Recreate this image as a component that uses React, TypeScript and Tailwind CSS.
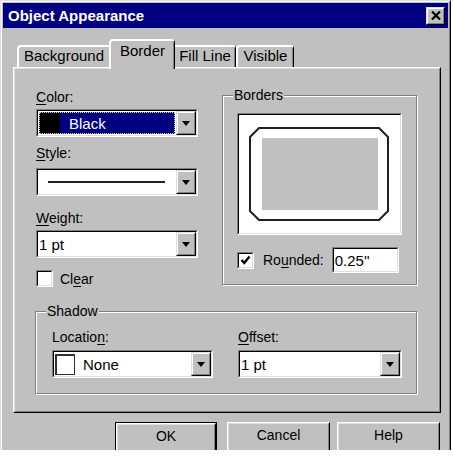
import React from "react";

// win95 style bevels
const sunkenOuter = "border border-t-[#808080] border-l-[#808080] border-r-white border-b-white";
const sunkenInner = "h-full border border-t-black border-l-black border-r-[#dfdfdf] border-b-[#dfdfdf]";
const raisedOuter = "border border-t-[#dfdfdf] border-l-[#dfdfdf] border-r-black border-b-black";
const raisedInner = "h-full bg-[#c0c0c0] border border-t-white border-l-white border-r-[#808080] border-b-[#808080]";

function U({ children }: { children: React.ReactNode }) {
  return <span className="underline underline-offset-2">{children}</span>;
}

function DropButton() {
  return (
    <div className={`w-[20px] h-full ${raisedOuter}`}>
      <div className={`${raisedInner} flex items-center justify-center`}>
        <svg width="8" height="5" viewBox="0 0 8 5">
          <polygon points="0,0 8,0 4,5" fill="#000" />
        </svg>
      </div>
    </div>
  );
}

function Combo({ className, children }: { className?: string; children: React.ReactNode }) {
  return (
    <div className={`h-[28px] ${sunkenOuter} ${className ?? ""}`}>
      <div className={`${sunkenInner} bg-white flex`}>
        <div className="flex-1 min-w-0 flex items-center text-[15px] leading-[17px]">{children}</div>
        <DropButton />
      </div>
    </div>
  );
}

function Label({ className, children }: { className?: string; children: React.ReactNode }) {
  return <div className={`h-[16px] leading-[16px] text-[14px] ${className ?? ""}`}>{children}</div>;
}

function CheckBox({ checked }: { checked?: boolean }) {
  return (
    <div className={`w-[17px] h-[17px] shrink-0 ${sunkenOuter}`}>
      <div className={`${sunkenInner} bg-white flex items-center justify-center`}>
        {checked && (
          <svg width="11" height="11" viewBox="0 0 11 11">
            <polyline points="1.5,5 4.2,8 9.5,1.5" fill="none" stroke="#000" strokeWidth="2.4" />
          </svg>
        )}
      </div>
    </div>
  );
}

function Group({ label, className, children }: { label: React.ReactNode; className?: string; children: React.ReactNode }) {
  return (
    <div className={`pt-[8px] ${className ?? ""}`}>
      <div className="border border-[#808080] shadow-[1px_1px_0_#ffffff,inset_1px_1px_0_#ffffff]">
        <div className="-mt-[9px] ml-[10px] w-fit bg-[#c0c0c0] px-px h-[16px] leading-[16px] text-[14px]">{label}</div>
        {children}
      </div>
    </div>
  );
}

function Btn({ label, def, className }: { label: string; def?: boolean; className?: string }) {
  return (
    <div className={`h-[32px] ${def ? "border border-black" : ""} ${className ?? ""}`}>
      <div className="h-full border border-t-white border-l-white border-r-black border-b-black">
        <div className="h-full bg-[#c0c0c0] border border-t-[#dfdfdf] border-l-[#dfdfdf] border-r-[#808080] border-b-[#808080] text-center text-[14px] leading-[16px] pt-[3px]">
          {label}
        </div>
      </div>
    </div>
  );
}

export default function App() {
  return (
    <div className="w-[454px] h-[456px] bg-white overflow-hidden text-black font-['Liberation_Sans',Arial,sans-serif]">
      <div className="w-[451px] h-[450px] overflow-hidden">
        <div className="h-[470px] border border-t-[#dfdfdf] border-l-[#dfdfdf] border-r-black border-b-black">
          <div className="h-full bg-[#c0c0c0] border border-t-white border-l-white border-r-[#808080] border-b-[#808080] p-px">
            {/* title bar */}
            <div className="h-[25px] bg-[#000080] flex items-center justify-between pl-[5px] pr-[3px]">
              <span className="text-white font-bold text-[15px] leading-[17px]">Object Appearance</span>
              <div className={`w-[19px] h-[18px] ${raisedOuter}`}>
                <div className={`${raisedInner} flex items-center justify-center`}>
                  <svg width="10" height="9" viewBox="0 0 10 9">
                    <path d="M1 0.5 L9 8.5 M9 0.5 L1 8.5" stroke="#000" strokeWidth="2.2" />
                  </svg>
                </div>
              </div>
            </div>

            {/* tabs */}
            <div className="mt-[11px] h-[28px] pl-[14px] flex items-end text-[15px] leading-[17px]">
              <div className="w-[92px] h-[22px] border-t-2 border-l-2 border-white rounded-tl-[4px] text-center">Background</div>
              <div className="relative z-10 -mb-[2px] w-[66px] h-[30px] pt-px bg-[#c0c0c0] border-t-2 border-l-2 border-r border-t-white border-l-white border-r-black shadow-[inset_-1px_0_0_#808080] rounded-t-[4px] text-center">
                Border
              </div>
              <div className="w-[61px] h-[22px] border-t-2 border-r border-t-white border-r-black shadow-[inset_-1px_0_0_#808080] rounded-tr-[4px] text-center">Fill Line</div>
              <div className="w-[58px] h-[22px] border-t-2 border-l-2 border-r border-t-white border-l-white border-r-black shadow-[inset_-1px_0_0_#808080] rounded-t-[4px] text-center">Visible</div>
            </div>

            {/* tab page */}
            <div className="ml-[10px] w-[428px] h-[346px] border border-t-white border-l-white border-r-black border-b-black">
              <div className="h-full border border-t-[#dfdfdf] border-l-[#dfdfdf] border-r-[#808080] border-b-[#808080] pt-[18px] pl-[20px]">
                <div className="flex items-start">
                  <div className="ml-px w-[162px] pt-[2px]">
                    <Label><U>C</U>olor:</Label>
                    <Combo className="mt-[4px]">
                      <div className="h-full flex-1 p-px">
                        <div className="h-full flex items-center bg-[#000080] border border-dotted border-[#d8d890]">
                          <div className="w-[20px] h-full bg-black" />
                          <span className="ml-[9px] text-white">Black</span>
                        </div>
                      </div>
                    </Combo>
                    <Label className="mt-[8px]"><U>S</U>tyle:</Label>
                    <Combo className="mt-[7px]">
                      <div className="ml-[10px] w-[117px] h-[2px] bg-[#202020]" />
                    </Combo>
                    <Label className="mt-[14px]"><U>W</U>eight:</Label>
                    <Combo className="mt-[4px]">
                      <span className="ml-px">1 pt</span>
                    </Combo>
                    <div className="mt-[12px] flex items-center">
                      <CheckBox />
                      <span className="ml-[7px] text-[14px] leading-[16px]">Cl<U>e</U>ar</span>
                    </div>
                  </div>

                  <Group label="Borders" className="ml-[24px] w-[195px]">
                    <div className={`mt-[10px] mx-[14px] h-[122px] ${sunkenOuter}`}>
                      <div className={`${sunkenInner} bg-white`}>
                        <svg width="161" height="118" viewBox="0 0 161 118" className="block">
                          <polygon
                            points="20,13 140,13 149,22 149,96 140,105 20,105 11,96 11,22"
                            fill="#fff"
                            stroke="#202020"
                            strokeWidth="2"
                          />
                          <rect x="23" y="23" width="116" height="72" fill="#c0c0c0" />
                        </svg>
                      </div>
                    </div>
                    <div className="mt-[12px] mb-[11px] ml-[14px] h-[26px] flex items-center">
                      <CheckBox checked />
                      <span className="ml-[9px] text-[14px] leading-[16px]">Ro<U>u</U>nded:</span>
                      <div className={`ml-[8px] w-[67px] h-[26px] ${sunkenOuter}`}>
                        <div className={`${sunkenInner} bg-white flex items-center pl-px text-[15px] leading-[17px]`}>0.25''</div>
                      </div>
                    </div>
                  </Group>
                </div>

                <Group label="Shadow" className="mt-[16px] w-[382px]">
                  <div className="mt-[10px] mb-[15px] pl-[16px] flex">
                    <div className="w-[161px]">
                      <Label>Locatio<U>n</U>:</Label>
                      <Combo className="mt-[5px]">
                        <div className="ml-px w-[20px] h-[21px] border border-[#303030] border-l-2 border-t-2 bg-white" />
                        <span className="ml-[8px]">None</span>
                      </Combo>
                    </div>
                    <div className="ml-[25px] w-[164px]">
                      <Label><U>O</U>ffset:</Label>
                      <Combo className="mt-[5px]">
                        <span className="ml-px">1 pt</span>
                      </Combo>
                    </div>
                  </div>
                </Group>
              </div>
            </div>

            {/* buttons */}
            <div className="mt-[9px] pl-[112px] flex">
              <Btn label="OK" def className="w-[102px]" />
              <Btn label="Cancel" className="ml-[10px] w-[103px]" />
              <Btn label="Help" className="ml-[7px] w-[103px]" />
            </div>
          </div>
        </div>
      </div>
    </div>
  );
}
